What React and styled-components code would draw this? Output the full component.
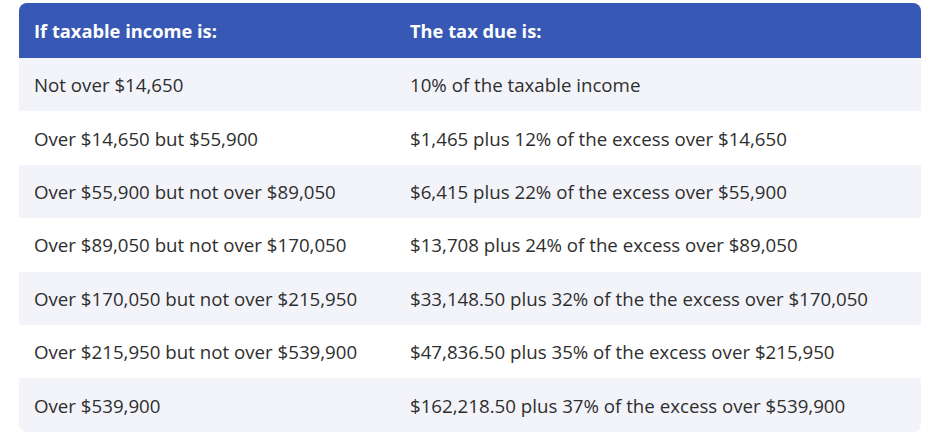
import React from "react";
import styled, { createGlobalStyle } from "styled-components";

const Global = createGlobalStyle`
  html, body { margin: 0; padding: 0; background: #ffffff; }
  body { font-family: "Open Sans", "Liberation Sans", sans-serif; }
`;

const Page = styled.div`
  padding: 3px 15px 0 19px;
  width: 936px;
  box-sizing: border-box;
`;

const Table = styled.table`
  width: 902px;
  border-collapse: separate;
  border-spacing: 0;
  table-layout: fixed;
`;

const HeadCell = styled.th`
  background: #3758b4;
  color: #ffffff;
  text-align: left;
  font-weight: 700;
  font-size: 18.3px;
  height: 55px;
  padding: 0 15px;
  box-sizing: border-box;
  width: ${(p) => (p.$first ? "376px" : "auto")};
  &:first-child { border-top-left-radius: 8px; }
  &:last-child { border-top-right-radius: 8px; }
`;

const Row = styled.tr`
  background: ${(p) => (p.$shaded ? "#f3f4fa" : "#ffffff")};
  &:last-child td:first-child { border-bottom-left-radius: 8px; }
  &:last-child td:last-child { border-bottom-right-radius: 8px; }
`;

const Cell = styled.td`
  color: #2e2e2e;
  font-size: 18.7px;
  height: 53.4px;
  padding: 0 15px;
  box-sizing: border-box;
  white-space: nowrap;
`;

const rows = [
  ["Not over $14,650", "10% of the taxable income"],
  ["Over $14,650 but $55,900", "$1,465 plus 12% of the excess over $14,650"],
  ["Over $55,900 but not over $89,050", "$6,415 plus 22% of the excess over $55,900"],
  ["Over $89,050 but not over $170,050", "$13,708 plus 24% of the excess over $89,050"],
  ["Over $170,050 but not over $215,950", "$33,148.50 plus 32% of the the excess over $170,050"],
  ["Over $215,950 but not over $539,900", "$47,836.50 plus 35% of the excess over $215,950"],
  ["Over $539,900", "$162,218.50 plus 37% of the excess over $539,900"],
];

export default function App() {
  return (
    <Page>
      <Global />
      <Table>
        <thead>
          <tr>
            <HeadCell $first>If taxable income is:</HeadCell>
            <HeadCell>The tax due is:</HeadCell>
          </tr>
        </thead>
        <tbody>
          {rows.map(([a, b], i) => (
            <Row key={i} $shaded={i % 2 === 0}>
              <Cell>{a}</Cell>
              <Cell>{b}</Cell>
            </Row>
          ))}
        </tbody>
      </Table>
    </Page>
  );
}
